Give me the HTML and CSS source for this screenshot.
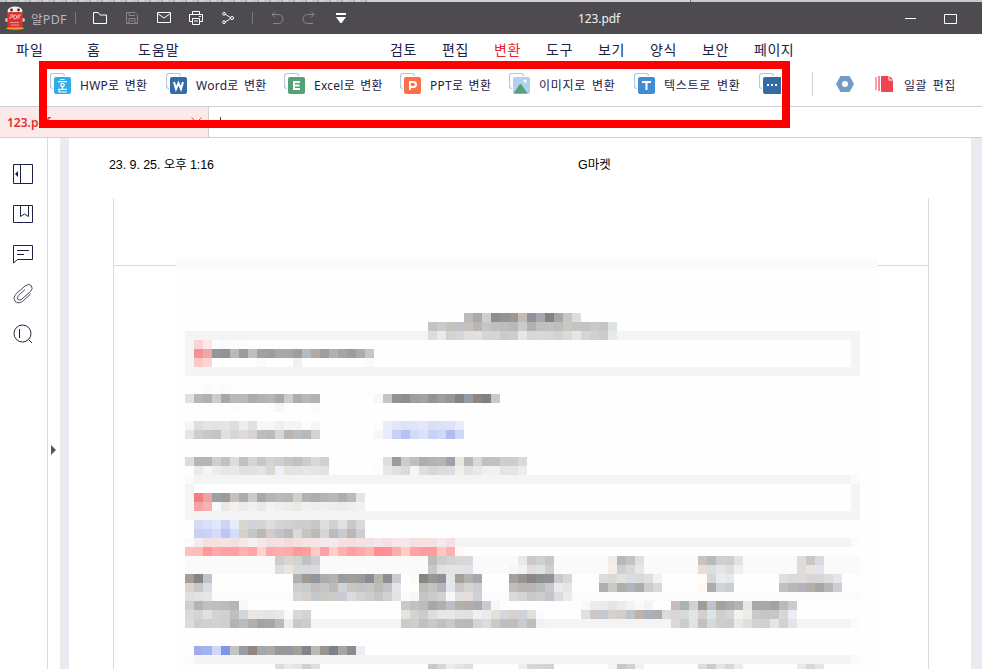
FILE: index.html
```html
<!DOCTYPE html>
<html lang="ko">
<head>
<meta charset="utf-8">
<title>123.pdf</title>
<link rel="stylesheet" href="styles.css">
</head>
<body>
<div class="backdrop"><i></i><b></b></div>
<header class="titlebar">
  <svg class="logo" width="20" height="24" viewBox="0 0 20 24"><ellipse cx="10" cy="22.300" rx="9" ry="1.500" fill="#f3a32b"/><ellipse cx="10" cy="5" rx="7.500" ry="4.500" fill="#f4efed"/><circle cx="6.500" cy="4" r="1.400" fill="#333"/><circle cx="13.500" cy="4" r="1.400" fill="#333"/><circle cx="2" cy="14" r="2" fill="#d9bdb0"/><circle cx="18" cy="14" r="2" fill="#d9bdb0"/><rect x="2.500" y="6" width="15" height="15.500" rx="2" fill="#df302e"/><path d="M5 9h3v2H5v2M9 9v4h1.500l1-1v-2l-1-1zM13 13V9h3M13 11h2" fill="none" stroke="#ffb9b1"/><path d="M5 16.500h9M6 19h8" stroke="#f3938b"/></svg>
  <span class="app">알PDF</span>
  <i class="vsep first"></i>
  <svg class="ti" width="16" height="16" viewBox="0 0 16 16"><path d="M1.500 13.500v-11h4.700l2 2.500h6.300v8.500z"/></svg>
  <svg class="ti dim" width="16" height="16" viewBox="0 0 16 16"><path d="M2.500 2.500h8.500l2.500 2.500v8.500h-11zM5 2.500v3h6M5 13.500v-5h6v5M6.500 11h3"/></svg>
  <svg class="ti" width="16" height="16" viewBox="0 0 16 16"><path d="M1.500 2.500h13v10h-13zM1.500 3.500l6.500 4.500 6.500-4.500"/></svg>
  <svg class="ti" width="16" height="16" viewBox="0 0 16 16"><path d="M4.500 4.500v-3h7v3M4.500 11.500h-3v-7h13v7h-3M4.500 8.500h7v6h-7zM11 6.500h2M6 11h4"/></svg>
  <svg class="ti" width="16" height="16" viewBox="0 0 16 16"><path d="M4.800 4l6 3.700M4.800 12.300l6-4"/><circle cx="4" cy="3.800" r="1.400"/><circle cx="4" cy="12.200" r="1.400"/><circle cx="12" cy="8" r="1.500"/></svg>
  <i class="vsep second"></i>
  <svg class="ti dim" width="16" height="16" viewBox="0 0 16 16"><path d="M6 1.500L3 4.500l3 3M3 4.500h6.500a4.500 4.500 0 0 1 0 9H4"/></svg>
  <svg class="ti dim" width="16" height="16" viewBox="0 0 16 16"><path d="M10 1.500l3 3-3 3M13 4.500H6.500a4.500 4.500 0 0 0 0 9H12"/></svg>
  <svg class="ti fill" width="16" height="16" viewBox="0 0 16 16"><path d="M3 3h10v2H3zM3 7h10l-4.300 6H7.300z"/></svg>
  <span class="doc">123.pdf</span>
  <svg class="min" width="13" height="13" viewBox="0 0 13 13"><path d="M1 6.500h11"/></svg>
  <svg class="max" width="13" height="13" viewBox="0 0 13 13"><path d="M.5 2.500h12v9H.5z"/></svg>
</header>

<nav class="menu">
  <div class="left"><span>파일</span><span>홈</span><span>도움말</span></div>
  <div class="right"><span>검토</span><span>편집</span><span class="on">변환</span><span>도구</span><span>보기</span><span>양식</span><span>보안</span><span>페이지</span></div>
</nav>

<div class="toolbar">
  <div class="tool hwp"><svg width="22" height="22"><use href="#back"/><rect x="4" y="4" width="17" height="17" rx="2" fill="#30ade9"/><path d="M10.500 6.500h4M8 8.700h9M12.500 14v2.300M8 16.300h9M9 16.300v2.700h8" fill="none" stroke="#fff" stroke-width="1.200"/><circle cx="12.500" cy="12" r="1.700" fill="none" stroke="#fff" stroke-width="1.200"/></svg><span>HWP로 변환</span></div>
  <div class="tool word"><svg width="22" height="22"><use href="#back"/><rect x="4" y="4" width="17" height="17" rx="2" fill="#346ba6"/><path d="M8 9l2 7 2.500-6 2.500 6L17 9" fill="none" stroke="#fff" stroke-width="2"/></svg><span>Word로 변환</span></div>
  <div class="tool excel"><svg width="22" height="22"><use href="#back"/><rect x="4" y="4" width="17" height="17" rx="2" fill="#55a278"/><path d="M16 9h-6v7h6M10 12.500h5.500" fill="none" stroke="#fff" stroke-width="2"/></svg><span>Excel로 변환</span></div>
  <div class="tool ppt"><svg width="22" height="22"><use href="#back"/><rect x="4" y="4" width="17" height="17" rx="2" fill="#ff7048"/><path d="M10 17V9h3.500a2.500 2.500 0 0 1 0 5H10" fill="none" stroke="#fff" stroke-width="2"/></svg><span>PPT로 변환</span></div>
  <div class="tool image"><svg width="22" height="22"><use href="#back"/><rect x="4" y="4" width="17" height="17" rx="2" fill="#b2cfef"/><path d="M4.500 20.500l6-9q1-1 2 0l6 9z" fill="#55a078"/><circle cx="16" cy="8" r="1.500" fill="#fff"/></svg><span>이미지로 변환</span></div>
  <div class="tool text"><svg width="22" height="22"><use href="#back"/><rect x="4" y="4" width="17" height="17" rx="2" fill="#408cd5"/><path d="M8 9h9M12.500 9v8" fill="none" stroke="#fff" stroke-width="2"/></svg><span>텍스트로 변환</span></div>
  <div class="tool more"><svg width="22" height="22"><use href="#back"/><rect x="4" y="4" width="19" height="17" rx="2" fill="#346ba6"/><path d="M8 11h2v2H8zm4 0h2v2h-2zm4 0h2v2h-2z" fill="#fff"/></svg></div>
  <i class="divider"></i>
  <svg class="nut" width="18" height="16" viewBox="0 0 18 16"><path d="M4.500 0h9L18 8l-4.500 8h-9L0 8z" fill="#729bc2"/><circle cx="9" cy="8" r="3" fill="#fff"/></svg>
  <svg class="batch" width="18" height="16" viewBox="0 0 18 16"><path d="M0 1h2v13H0z" fill="#f7a2aa"/><path d="M3 0h2v15H3z" fill="#f58a94"/><path d="M6 0h7.500v4.500H18V16H7q-1 0-1-1z" fill="#f04455"/><path d="M14.500 0l3.500 3.500h-3.500z" fill="#f04455"/></svg>
  <span class="batch-label">일괄 편집</span>
</div>

<div class="tabs"><div class="tab"><b>123.pdf</b><svg width="11" height="11" viewBox="0 0 11 11"><path d="M.5.500l10 10M10.500.500l-10 10"/></svg></div><i class="caret"></i></div>

<main class="work">
  <aside class="side">
    <svg width="22" height="22" viewBox="0 0 22 22"><path d="M1.500 1.500h19v19h-19zM8.500 1.500v19"/><path d="M6 8v6l-3-3z" fill="#1d2145" stroke="none"/></svg>
    <svg width="22" height="22" viewBox="0 0 22 22"><path d="M1.500 2.500h19v17h-19zM8.500 2.500v11l4-2.500 4 2.500v-11"/></svg>
    <svg width="22" height="22" viewBox="0 0 22 22"><path d="M1.500 20V2.500h19v14H5.500zM5 7.500h12M5 11.500h7"/></svg>
    <svg width="22" height="22" viewBox="0 0 22 22"><path class="soft" d="M13 6.500l-6.500 6q-2.300 2.500-.5 4t4-.5l8.500-7.500q3-3 .8-5.800t-6.300.3l-8.500 7.500q-4 4-1.500 7.500t7.500.500l8-7.500" /></svg>
    <svg width="22" height="22" viewBox="0 0 22 22"><circle cx="10.500" cy="10.500" r="8.500"/><path d="M16.500 16.500l3.500 3.500M7.500 6v9"/></svg>
  </aside>
  <div class="gutter"><svg width="7" height="10"><path d="M1 0v10l5-5z" fill="#555"/></svg></div>
  <section class="sheet">
    <div class="pagehead"><span>23. 9. 25. 오후 1:16</span><span>G마켓</span></div>
    <div class="frame">
      <div class="band"></div>
      <svg class="mosaic" width="702" height="414" shape-rendering="crispEdges"></svg>
    </div>
  </section>
</main>
<div class="highlight"></div>
<svg width="0" height="0" class="defs"><defs><path id="back" d="M3 15.500q-2.500 0-2.500-2.500V3Q.5.500 3 .500h9q2.500 0 2.500 2.500" fill="none" stroke="#b4cadc" stroke-width="1.200"/></defs></svg>
<script src="mosaic.js"></script>
</body>
</html>
```
FILE: styles.css
```css
* { box-sizing: border-box; }
body { margin: 0; width: 982px; height: 669px; overflow: hidden; display: flex; flex-direction: column; background: #fff; color: #1d2145; font: 13px "Noto Sans", "Noto Sans CJK KR", sans-serif; }
.backdrop { height: 2px; flex: none; display: flex; background: #c9c9cb; }
.backdrop i { width: 370px; background: repeating-linear-gradient(90deg, #c3c5c6 0 5px, #b0b3b5 5px 7px, #cfd1d2 7px 12px); }
.backdrop b { width: 321px; background: #d2d2d4; border-right: 1px solid #777; }
.titlebar { height: 32px; flex: none; display: flex; align-items: center; background: #4d4b50; padding-left: 5px; }
.titlebar svg { flex: none; }
.app { width: 39px; margin-left: 6px; color: #b9b8bb; font-size: 12.500px; letter-spacing: .3px; white-space: nowrap; }
.vsep { width: 1px; height: 12px; background: #7a797d; }
.first { margin: 0 16px 0 5px; }
.second { margin: 0 16px 0 0; }
.ti { margin-right: 16px; fill: none; stroke: #fff; }
.dim { stroke: #88868b; }
.fill { fill: #fff; stroke: none; }
.doc { width: 44px; margin-left: 213px; color: #f1f1f1; font-size: 12px; letter-spacing: -.1px; white-space: nowrap; }
.min, .max { fill: none; stroke: #fff; }
.min { margin-left: 282px; }
.max { margin-left: 27px; }
.menu { height: 28px; flex: none; display: flex; align-items: center; font-size: 14px; line-height: 20px; padding: 3px 0 0 16px; white-space: nowrap; }
.left { width: 374px; display: flex; letter-spacing: 1px; }
.left span:nth-child(1) { width: 71px; }
.left span:nth-child(2) { width: 51px; }
.right { display: flex; letter-spacing: .5px; }
.right span { width: 52px; }
.right span:last-child { width: 60px; }
.on { color: #e5282c; }
.toolbar { height: 45px; flex: none; border-bottom: 1px solid #cfced9; display: flex; align-items: center; padding-left: 50px; white-space: nowrap; font-size: 12px; word-spacing: 2px; }
.tool { height: 22px; display: flex; align-items: center; flex: none; letter-spacing: .25px; }
.tool svg { flex: none; margin-right: 8px; }
.tool span { line-height: 18px; padding-top: 3px; }
.hwp, .word, .excel, .ppt, .image, .text, .more { width: 116px; }
.word { width: 118px; }
.ppt { width: 109px; }
.image, .text { width: 125px; letter-spacing: .75px; }
.more { width: 53px; }
.divider { width: 1px; height: 24px; background: #cfced9; }
.nut { margin-left: 23px; }
.batch { margin-left: 21px; }
.batch-label { margin-left: 11px; padding-top: 2px; letter-spacing: .5px; }
.tabs { height: 31px; flex: none; display: flex; align-items: center; border-bottom: 1px solid #cfced9; }
.tab { width: 209px; height: 30px; display: flex; align-items: center; justify-content: space-between; padding: 0 6px 0 7px; background: #fbeae9; border-right: 1px solid #cfced9; color: #e32f2f; font-size: 13px; }
.tab b { font-weight: 600; font-size: 12px; }
.tab svg { fill: none; stroke: #e05252; }
.caret { width: 1px; height: 11px; margin-left: 11px; background: #444; }
.work { flex: 1; min-height: 0; display: flex; background: #eaebf0; }
.side { width: 48px; flex: none; border-right: 1px solid #dadbdd; background: #fff; display: flex; flex-direction: column; gap: 18px; padding: 25px 0 0 12px; }
.side svg { fill: none; stroke: #1d2145; flex: none; }
.side .soft { stroke: #474966; }
.gutter { width: 12px; background: #fff; padding: 307px 0 0 2px; }
.gutter svg { display: block; }
.sheet { width: 902px; margin-left: 9px; background: #fff; padding: 0 42px 0 44px; overflow: hidden; }
.pagehead { height: 60px; display: flex; padding-top: 18px; margin-left: -4px; color: #000; font: 12.500px/18px "Liberation Sans", "Noto Sans CJK KR", sans-serif; white-space: nowrap; }
.pagehead span:first-child { width: 469px; letter-spacing: -.08px; }
.frame { height: 480px; display: grid; grid-template-columns: 63px 702px 1fr; border: solid #dadbdb; border-width: 0 1px; }
.band { grid-area: 1 / 1 / 2 / 4; height: 68px; border-bottom: 1px solid #dadbdb; }
.mosaic { grid-area: 1 / 2; margin-top: 61px; margin-left: -1px; display: block; background: #fefefe; }
.highlight { position: absolute; left: 39px; top: 61px; width: 751px; height: 67px; border: 8px solid #f00; }
.defs { position: absolute; }
```
FILE: mosaic.js
```js
// Each run: row, column, cell tones. Two digits = grey, six = colour, "." = blank, "*n" = repeat.
const runs = `
0 -1 fb*78
8 0 f4*75
9 0 f4
10 0 f4
11 0 f4
9 74 f4
10 74 f4
11 74 f4
12 0 f4*75
24 0 fa f4*73 fb
25 0 f4
26 0 f4
27 0 f4
25 74 f4
26 74 f4
27 74 f4
28 0 f4*75
31 0 f4*74 fb
33 0 fa*75
34 0 fa*75
37 0 fb*75
40 0 f4*74 fb
44 0 fb f4*73 fb
6 31 bb aa cf 8a8f92 94 9d9693 bfbdb6 919295 a5a8af 83 aca6a2 c2c7c9 dcdde2
7 27 c5c4c2 cdc9c6 c5c3c1 bec2c6 c6c1bd b5b7b9 c6 bf bd bbb7b5 cb b1 c1c0be c0c1c5 bd c9c8c5 c8c5c1 c3c3c5 c9 c7c4c5 dde2e5
8 27 dc ea d2 d4d6d8 e0 e2e1df d4d5d5 d5 ca cd e5e6e7 d7 dad9d8 d6d6d7 d2d2d4 dbdad8 e5e6e5 d6 d1 cb e8e9ea
9 1 fad4d4 fde7e7 fd fa fc fc
10 1 f49393 f2a6a4 94969a 93 beb8b4 9d9c9b c0beba 9da1a9 a39b9a a8 a7 9d9ea1 b4bbbf b0aaa4 9f aeb3b2 a8a3a1 9c9ea0 aaacab c4c5cb
11 1 fac8c8 fbd5d5
11 8 fb . . . f1
11 20 fb
14 1 fd fafcfa fd fb fd
15 0 e7dfdb b6b7bd b0b1b4 cdcdc8 aba6a6 b4babe bcb8b4 a8adb2 b3b2ad b6b4b8 a9aaae cbcdcd b0ada8 b5b7be b0b3b3 f9ffff
15 21 f7 c9c4bf 93 8e 9e9f9a a0a2a9 9b928b 9b9fa1 969693 89827e 949ba5 8e8583 7d8180 c6cacd
16 5 fefcfa fbfdfe . . fefbf9 f5f6f9 . . . fb
18 0 f7f4f3 dcddde e4e5e6 e3 e8e4e4 dfdedd edeef1 e0 f4f6f7 f8f6f4 efeff2 f5 f5 fc f6
18 21 fd e9ecfa e1e7f9 dde4f8 e1e4f8 e3e7f8 d8dff9 dce1f7 dfe3f7 e9ecfc
19 0 e9e3e0 cdced0 c6c7ca c3c4c4 e3dedf d7d6d4 e1dad7 d5d5d8 b9bebf bcbab8 d5d6da bab5b3 b8bcc3 b7b8bb d3
19 21 f7 e9ecfa c7d2f6 b3c2f0 d3daf6 dce3f8 c5d1f5 d1d8f4 b0bdef cfd8f5
22 0 dc b6b5b3 b3b6bf cf c3c2c0 dbdddf c2c1bf d5d4d2 c7 d4d4d3 cfcfd0 c8c7c3 bec1c8 cc dad9d8 cfd0d6
22 21 fc e2ddd5 9c9c9e c8cdd0 bfbfc0 b1aca6 afb4b7 b6b5b4 9fa2a8 e7e6e0 b9b9bf d9d8d7 c1c0be c1c1c3 cecdca cd d7dbdf
23 0 fefcf9 e8ebee f5 edecea e7 e8e8e7 e1e1e0 e0e1e1 e4 d9d8d5 ebf1f4 e4e3e1 e1e3e7 e6 e5e5e3 e2
23 21 fc e9e8e7 e0 d9dadc f6 e0dfdc d6d7d7 dbdcdc dcdde0 f0f0ed e2e2e3 e9 f0 f2f1ee e4e6e5 e4e5e4 ebeced
26 1 f17f7e f3a19c 9aa1a6 9b c5c0bc adacab cacac8 aaa9a8 b3b5b8 b8b9bc b5b6b8 d4cec7 b0b2b5 acadb0 b3b4b6 b7b8bb adaeb0 b8babd e4
27 1 f6a3a5 f6b1b2 f9 e9 f3f0ed eb f2f0ef e9 f0f3f2 ee ec ebe9e7 f0 ee f0 ed edece9 edeff2 f2
29 1 d5dbf6 d6e1fb e1e7fa cbd6f3 e6ecfc dad6d0 d2d3d6 d6d5d4 dedddb d3d4d5 d0d1d3 cfcecd cccdce cbc7c4 dcdde3 d3d1cf dfe1e4 cdc7c6 d6dbdc
30 1 c9d0f2 c5d4fa d6dbf7 bbc8f3 d1ddfa d5d0c9 c4c5c9 bbb8b4 cfcecc c2c4c9 bebab7 dad9d7 c3c5c6 bcbab9 d4d7d6 b9bbbf c6cace bdb7b4 cbcfd3
31 0 fa f5ebed f5dfdf f5e1e0 f5e2e3 f4dee1 f4e7e7 f5f0f1 f4e9e9 f5e0e1 f4e1e1 f4dadb f5dfe0 f4e3e3 f5e4e5 f4e8ec f4e9ed f5dfdf f5dedf f4e2e2 f4e2e2 f5e6e9 f5dfe0 f5e7e7 f4e8e9 f5e0e2*3 f4e9eb f5dfe0
32 0 ffbfbe ffbcba ff9995 ffaaa9 ffa0a4 ffa0a4 ffb0b1 ffa5a4 ffd3d1 ffaaa9 ffadac ffa9a9 ff9995 ff9da0 ffcbc4 ffa0a5 ffcecb ffb0b2 ff9fa0 ffa7a9 ffb5b3 ff8f8f ff9091 ffadac ffcdc8 ffa4a3 ff9c9d ff9c9d ffc8c6 ffb0b4 fff8f8
33 10 cdcdce dbd5d1 d2d4d2 c2c1c1 cdced3
34 10 dddddf eae4e1 d8dbda d5d9db d9dade
33 27 bbbdbb cecdca d3d3d1 dad8d7 d8d9df
34 27 c8 dfe0df e4e4e3 e4 e0e2e6
33 37 e9e8e6 cec9c8 ccd0d2 c7
34 36 f6 f2 dddedd e0e1e3 ceced0
33 47 f2ece8 b8b8bb c3c2c5 df
34 47 f4eeeb cfcfd2 d8d8d8 e6e7e6
33 57 c9c2bf b5babc cfd0d4 cfcdce e2e4e3
34 57 e4dedb dbdfdd e5e6e9 dfdedd eef0ef
33 68 dedcd6 c9c7c9 d8dae1
34 68 dddcd9 e5e4e2 e4e5eb
35 0 a49f97 858584 bdc5cc
36 0 d8d3cf c7 dcdde1
37 0 df e3 e5e6e8
35 12 b5b0af 9e9994 92959b aaabac b6b2b2 999b9d a39c97 979b9e 8b8b91 b8b4ad 8b8e96 ccccce
36 12 cdcdce c9caca c3bebb c5c6c7 bcbbb9 d0d4d7 c8c7c4 c4c2c2 c6c7c4 babab9 c4c4c6 e5e6ea
37 12 d5d5d4 d4d2cf c4c9cf cbcac6 cccbc9 c9ccd2 dadadf d3d2d4 cecece c5c5c9 d1 e2e3e8
35 25 fffaf4 858583 969694 8d9098 e3e6e7 a49f99 b0b3af a4a8b2
36 25 fd bcbaba c4c3c0 b5b6b9 e5e6e9 cbc8c9 d6d5d2 caced3
37 25 f8f7f5 c5 cbcbcc d1d2d6 f8 dfdfe0 e4dedb cdd1d5
35 36 a5a09b 95958e 878785 8d9291 919299 cacacc d8
36 36 c3bcb8 b8b7b5 b8b7b4 b9bdbe c8c8cf eaeaeb e5
37 36 dbdad8 d5d4d2 c9 cdcdce c4c4c9 d9dbe0 eb
35 46 dbdbd9 d9d9d7 dfe0df dbdcdf dbdad9 df f3
36 46 b0afae c9c9ca b4aca7 b0b6bd abacad cc d9
35 57 fefdfb d5d6d5 eaebee e7e8e9
36 57 fff7f0 aaacaf d0d4d8 cccdce
35 66 df d8dbdd dedcdb d8d6d4 d8d7d7 dcdddd e5e6e9
36 66 c1c0bf b8b8b6 b3b4bb b5aeaa a6a6a5 b6b6b6 cbcfd4
38 0 d2cecb b4b4b5 c2bfc0 b9bfc2 bcbcbb b6b5b4 f8
39 0 ddd8d6 d4d5d5 e1e1e0 d5d3d1 d0d1d2 bfbfc2 d4d6d9 e8e7e6 e7e6e6 e4e5e8 e9 fb d8d8d7 d4d4d3 fd
40 0 ddddda cdcecf cfd1ce d1d2d6 d3cec8 b6b2af b8bebe b4afac a3a3a2 a6a6a7 bbb9b8 edefed c8c8c6 cecdcd f3f4f6
38 24 c9cac8 bfc2bf bcbdbb a7a6a8 b3afaa bdbfc7 b2b1ac b3acad a9acb0 c7cbd0 f7
39 24 e5e4e2 d3d3cf caccca dd e6e8e8 e7e7e4 e2e3e1 e1e1e0 eff0f2 ebeae9 e2e0da d6d7dd d7d2cf d0d2d7 dee0df f9fcff
40 24 cbcac9 ce c0c0c1 c9 c0c0bf c9 bbbaba b8 d3d5d8 dbdcdd cbc9c2 bcbdc5 c2bdb8 c7cbd4 c2bcb8 edf2f7
38 44 f9f9f5 ebeced eaebf0 e5e3e4 ecebe6 edf3f8 fbfaf5 f1f4f7
39 44 e1e0df cbc7c6 c5c7d2 d5d1cc d1cdc9 bdc3c9 bbb2ac aab1ba afadaa d9dcda
38 54 c6bdbb abb2b5 d1d2d1 a19b99 bbc3cd a3a39d a9a8ab b3b3b2 e6e8e7 a8a8a6 aba9a5 a0a2aa b9babc cc
39 54 d7d6d9 d5dada e5e4e1 d3cfcd dde4e6 cfcfd1 d5d5d8 f3 f1ece8 c9 c4c6c6 c5c6c7 d9d7d2 ebeef4
40 54 ddd8d8 cccecd e0e2e7 c6bfbb d4d9db cecdcf cdccc9 e9 df d1d2d2 cfd1cf e4e5e8 d1d1cf e3e4e6
43 1 a3ace9 9db6f1 d3d7f6 7d95e7 c1c4c1 9b9ea1 928780 a1a7ad aca8a5 9b9792 96989d a5a097 81848a bab9b6 98958f 7e8188 a7a4a4 8d8c8a eaedf4
45 10 dddddf eee7e3 e2e5e4 d1d0ce dddfe5
45 27 c9c9cb d5 ebebea e5 dedfe0
45 37 f0efed d7 d2d6da d3
45 47 f8f3ef c7c7ca d1 f2
45 57 e2dbd8 c7ccd1 e3e4e5 dbd6d7 eaeeed
45 68 eee8e4 d8d8da e2e6ed
`;
const CELL = 9;
const NS = "http://www.w3.org/2000/svg";
const mosaic = document.querySelector(".mosaic");
for (const line of runs.trim().split("\n")) {
  const [row, col, ...tones] = line.split(" ");
  let x = Number(col) + 1;
  for (const tone of tones) {
    const [code, count] = tone.split("*");
    const n = Number(count || 1);
    if (code !== ".") {
      const rect = document.createElementNS(NS, "rect");
      rect.setAttribute("x", x * CELL);
      rect.setAttribute("y", row * CELL);
      rect.setAttribute("width", n * CELL);
      rect.setAttribute("height", CELL);
      rect.setAttribute("fill", "#" + (code.length === 2 ? code.repeat(3) : code));
      mosaic.append(rect);
    }
    x += n;
  }
}
```
